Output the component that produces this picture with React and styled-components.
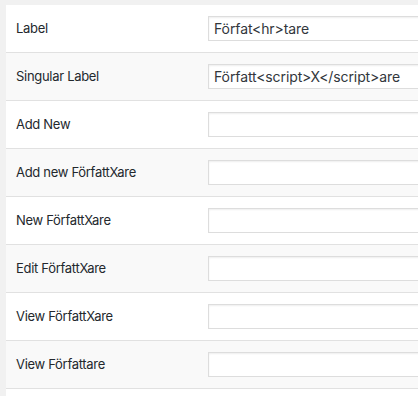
import React from "react";
import styled, { createGlobalStyle } from "styled-components";

const GlobalStyle = createGlobalStyle`
  html, body {
    margin: 0;
    padding: 0;
    background: #f1f1f1;
    overflow: hidden;
  }
  body {
    font-family: Inter, "Liberation Sans", Arial, sans-serif;
    font-size: 13px;
    color: #23282d;
  }
`;

const Page = styled.div`
  padding: 5px 0 0 6px;
  width: 700px;
`;

const Table = styled.div`
  background: #fff;
`;

const Row = styled.div`
  display: grid;
  grid-template-columns: 202px 1fr;
  align-items: center;
  height: 47px;
  border-bottom: 1px solid #e1e1e1;
  background: ${(p) => (p.$alt ? "#f9f9f9" : "#fff")};
`;

const Label = styled.label`
  padding-left: 10px;
  font-size: 13px;
  letter-spacing: -0.3px;
  line-height: 1.4;
  color: #23282d;
`;

const Input = styled.input`
  box-sizing: border-box;
  width: 400px;
  height: 25px;
  margin: 0;
  padding: 0 5px;
  border: 1px solid #ddd;
  border-radius: 0;
  box-shadow: inset 0 1px 2px rgba(0, 0, 0, 0.07);
  background: #fff;
  font-family: Inter, "Liberation Sans", Arial, sans-serif;
  font-size: 14px;
  letter-spacing: -0.1px;
  color: #32373c;
  outline: none;
`;

const fields = [
  { label: "Label", value: "Förfat<hr>tare" },
  { label: "Singular Label", value: "Författ<script>X</script>are" },
  { label: "Add New", value: "" },
  { label: "Add new FörfattXare", value: "" },
  { label: "New FörfattXare", value: "" },
  { label: "Edit FörfattXare", value: "" },
  { label: "View FörfattXare", value: "" },
  { label: "View Författare", value: "" },
  { label: "", value: "" },
];

const App = () => {
  return (
    <>
      <GlobalStyle />
      <Page>
        <Table>
          {fields.map((f, i) => (
            <Row key={i} $alt={i % 2 === 1}>
              <Label>{f.label}</Label>
              <div>
                <Input type="text" defaultValue={f.value} />
              </div>
            </Row>
          ))}
        </Table>
      </Page>
    </>
  );
};

export default App;
